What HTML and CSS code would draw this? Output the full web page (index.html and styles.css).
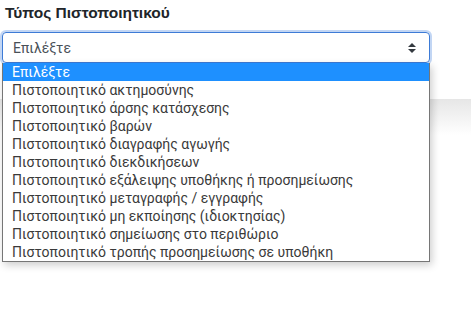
FILE: index.html
```html
<!DOCTYPE html>
<html lang="el">
<head>
<meta charset="utf-8">
<link rel="stylesheet" href="styles.css">
</head>
<body>
<div class="page">
  <div class="field">
    <label class="label">Τύπος Πιστοποιητικού</label>
    <div class="select-wrap">
      <div class="select">
        <span class="value">Επιλέξτε</span>
        <svg class="arrows" width="10" height="12" viewBox="0 0 10 12"><path d="M1 5 L5 1 L9 5 Z M1 7 L5 11 L9 7 Z" fill="#343a40"/></svg>
      </div>
      <ul class="options">
        <li class="opt active">Επιλέξτε</li>
        <li class="opt">Πιστοποιητικό ακτημοσύνης</li>
        <li class="opt">Πιστοποιητικό άρσης κατάσχεσης</li>
        <li class="opt">Πιστοποιητικό βαρών</li>
        <li class="opt">Πιστοποιητικό διαγραφής αγωγής</li>
        <li class="opt">Πιστοποιητικό διεκδικήσεων</li>
        <li class="opt">Πιστοποιητικό εξάλειψης υποθήκης ή προσημείωσης</li>
        <li class="opt">Πιστοποιητικό μεταγραφής / εγγραφής</li>
        <li class="opt">Πιστοποιητικό μη εκποίησης (ιδιοκτησίας)</li>
        <li class="opt">Πιστοποιητικό σημείωσης στο περιθώριο</li>
        <li class="opt">Πιστοποιητικό τροπής προσημείωσης σε υποθήκη</li>
      </ul>
    </div>
  </div>
  <div class="band"></div>
</div>
</body>
</html>
```
FILE: styles.css
```css
html, body {
  margin: 0;
  padding: 0;
  background: #fff;
}
.page {
  width: 471px;
  height: 313px;
  overflow: hidden;
  font-family: Roboto, "Noto Sans", sans-serif;
}
.field {
  padding: 4px 41px 0 2px;
}
.label {
  display: block;
  font-family: "Liberation Sans", Arial, sans-serif;
  font-weight: bold;
  font-size: 15.5px;
  line-height: 18px;
  color: #212529;
  padding-left: 3px;
  margin-bottom: 10px;
}
.select-wrap {
  position: relative;
}
.select {
  box-sizing: border-box;
  height: 31px;
  border: 1px solid #3d7bd6;
  border-radius: 4px;
  box-shadow: 0 0 0 2px rgba(120, 165, 230, 0.45);
  display: flex;
  align-items: center;
  justify-content: space-between;
  padding: 0 12px 0 10px;
  font-size: 14px;
  color: #495057;
}
.arrows {
  display: block;
}
.options {
  position: absolute;
  left: 0;
  right: 0;
  top: 31px;
  margin: 0;
  padding: 0;
  list-style: none;
  background: #fff;
  border: 1px solid #767676;
  border-top: none;
  box-shadow: 2px 3px 8px rgba(0, 0, 0, 0.2);
  z-index: 2;
}
.opt {
  font-size: 14px;
  line-height: 18px;
  height: 18px;
  padding-left: 9px;
  color: #3a3a3a;
  white-space: nowrap;
}
.opt.active {
  background: #1e90ff;
  color: #fff;
}
.band {
  margin-top: 36px;
  height: 36px;
  background: linear-gradient(#e6e6e6, #ffffff);
}
```
